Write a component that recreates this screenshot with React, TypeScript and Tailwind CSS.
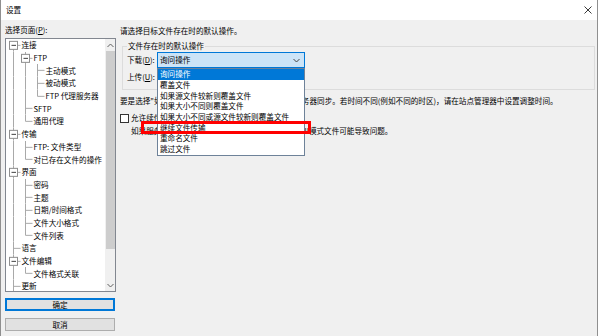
import React from "react";

type Row = { t: string; l: number; exp?: boolean; last?: boolean; first?: boolean };

const rows: Row[] = [
  { t: "连接", l: 0, exp: true, first: true },
  { t: "FTP", l: 1, exp: true },
  { t: "主动模式", l: 2 },
  { t: "被动模式", l: 2 },
  { t: "FTP 代理服务器", l: 2, last: true },
  { t: "SFTP", l: 1 },
  { t: "通用代理", l: 1, last: true },
  { t: "传输", l: 0, exp: true },
  { t: "FTP: 文件类型", l: 1 },
  { t: "对已存在文件的操作", l: 1, last: true },
  { t: "界面", l: 0, exp: true },
  { t: "密码", l: 1 },
  { t: "主题", l: 1 },
  { t: "日期/时间格式", l: 1 },
  { t: "文件大小格式", l: 1 },
  { t: "文件列表", l: 1, last: true },
  { t: "语言", l: 0 },
  { t: "文件编辑", l: 0, exp: true },
  { t: "文件格式关联", l: 1, last: true },
  { t: "更新", l: 0 },
];

const options = [
  "询问操作",
  "覆盖文件",
  "如果源文件较新则覆盖文件",
  "如果大小不同则覆盖文件",
  "如果大小不同或源文件较新则覆盖文件",
  "继续文件传输",
  "重命名文件",
  "跳过文件",
];

const RH = 12.7;
const LINE = "#a9a9a9";

const Acc = ({ k }: { k: string }) => (
  <span className="underline underline-offset-1">{k}</span>
);

const TreeRow = ({ row, cont }: { row: Row; cont: boolean[] }) => {
  const w = 12 * row.l + 15;
  const mid = RH / 2;
  const cx = 7.5 + 12 * row.l;
  return (
    <div className="flex h-[12.7px] items-center whitespace-nowrap">
      <svg width={w} height={RH} className="shrink-0">
        {cont.map((c, a) =>
          c ? (
            <line key={a} x1={7.5 + 12 * a} x2={7.5 + 12 * a} y1={0} y2={RH} stroke={LINE} />
          ) : null,
        )}
        <line x1={cx} x2={cx} y1={row.first ? mid : 0} y2={row.last ? mid : RH} stroke={LINE} />
        <line x1={cx} x2={cx + 7} y1={mid} y2={mid} stroke={LINE} />
        {row.exp ? (
          <>
            <rect x={cx - 4} y={mid - 4} width={8} height={8} fill="white" stroke="#8e8e8e" />
            <line x1={cx - 2} x2={cx + 2.5} y1={mid} y2={mid} stroke="#404040" />
          </>
        ) : null}
      </svg>
      <span className="pl-[0.5px]">{row.t}</span>
    </div>
  );
};

const Chevron = ({ up }: { up?: boolean }) => (
  <svg width="7" height="5" viewBox="0 0 7 5">
    <polyline
      points={up ? "0.5,4 3.5,1 6.5,4" : "0.5,1 3.5,4 6.5,1"}
      fill="none"
      stroke="#606060"
      strokeWidth="1"
    />
  </svg>
);

export default function App() {
  const stack: boolean[] = [];
  const conts = rows.map((r) => {
    const cont = stack.slice(0, r.l);
    stack[r.l] = !r.last;
    stack.length = r.l + 1;
    return cont;
  });

  return (
    <div className="h-[336px] w-[600px] bg-white font-['Noto_Sans_CJK_SC',sans-serif] text-[7.6px] leading-[10px] text-black">
      <div className="flex h-full w-[598px] flex-col border-x border-[#8f8f8f]">
        {/* title bar */}
        <div className="flex h-[20px] shrink-0 items-center justify-between bg-white pl-[5px] pr-[5px]">
          <span>设置</span>
          <svg width="8" height="8" viewBox="0 0 8 8">
            <path d="M0.5 0.5 L7.5 7.5 M7.5 0.5 L0.5 7.5" stroke="#222" strokeWidth="0.9" />
          </svg>
        </div>

        <div className="flex flex-1 bg-[#f0f0f0]">
          {/* left pane */}
          <div className="flex w-[115px] shrink-0 flex-col pl-[4px] pt-[5px]">
            <div className="h-[10px]">
              选择页面(<Acc k="P" />):
            </div>
            <div className="mt-[3px] flex h-[254px] w-[111px] border border-[#828790] bg-white">
              <div className="flex-1 overflow-hidden">
                {rows.map((r, i) => (
                  <TreeRow key={r.t} row={r} cont={conts[i]} />
                ))}
              </div>
              <div className="flex w-[10px] flex-col bg-[#f0f0f0]">
                <div className="flex h-[12px] items-center justify-center">
                  <Chevron up />
                </div>
                <div className="mx-[0.5px] h-[198px] bg-[#cdcdcd]" />
                <div className="flex-1" />
                <div className="flex h-[11px] items-center justify-center">
                  <Chevron />
                </div>
              </div>
            </div>
            <button className="mt-[6px] flex h-[13px] w-[110px] items-center justify-center border-2 border-[#0078d7] bg-[#e1e1e1]">
              确定
            </button>
            <button className="mt-[7px] flex h-[13px] w-[110px] items-center justify-center border border-[#adadad] bg-[#e1e1e1]">
              取消
            </button>
          </div>

          {/* right pane */}
          <div className="relative flex-1 pl-[4px] pt-[6px]">
            <p className="h-[10px] whitespace-nowrap">请选择目标文件存在时的默认操作。</p>
            <fieldset className="ml-[2px] mr-[2px] mt-[5px] border border-[#dcdcdc] px-[4px] pb-[4px]">
              <legend className="px-[1px] leading-[10px]">文件存在时的默认操作</legend>
              <div className="mt-[1px] flex items-center">
                <span className="w-[30px]">
                  下载(<Acc k="D" />):
                </span>
                <div className="relative flex h-[16px] w-[148px] items-center justify-between border border-[#0078d7] bg-[#cce4f7] pl-[2px] pr-[4px]">
                  <span>询问操作</span>
                  <svg width="7" height="5" viewBox="0 0 7 5">
                    <polyline points="0.5,1 3.5,4 6.5,1" fill="none" stroke="#444" strokeWidth="1" />
                  </svg>
                  <div className="absolute left-[-1px] top-[15px] z-10 w-[148px] border border-[#6e8299] bg-white">
                    {options.map((o, i) => (
                      <div
                        key={o}
                        className={`flex h-[10.7px] items-center whitespace-nowrap pl-[2px] ${
                          i === 0 ? "bg-[#0078d7] text-white" : ""
                        }`}
                      >
                        {o}
                      </div>
                    ))}
                  </div>
                </div>
              </div>
              <div className="mt-[1px] flex items-center">
                <span className="w-[30px]">
                  上传(<Acc k="U" />):
                </span>
                <div className="flex h-[16px] w-[148px] items-center border border-[#adadad] bg-[#e1e1e1] pl-[2px]">
                  询问操作
                </div>
              </div>
            </fieldset>
            <p className="mt-[6px] h-[10px] whitespace-nowrap">
              要是选择"如果源文件较新则覆盖文件"，请确保它与服务器同步。若时间不同(例如不同的时区)，请在站点管理器中设置调整时间。
            </p>
            <div className="mt-[7px] flex h-[10px] items-center gap-[2px]">
              <span className="h-[9px] w-[9px] border border-[#333] bg-white" />
              <span>允许续传ASCII文件(A)</span>
            </div>
            <p className="mt-[3px] h-[10px] whitespace-nowrap pl-[11px]">
              如果服务器和客户端使用不同的换行格式，续传ASCII模式文件可能导致问题。
            </p>
            <div className="absolute left-[25px] top-[101px] z-20 h-[13px] w-[170px] border-[3px] border-[#ff0000]" />
          </div>
        </div>
      </div>
    </div>
  );
}
